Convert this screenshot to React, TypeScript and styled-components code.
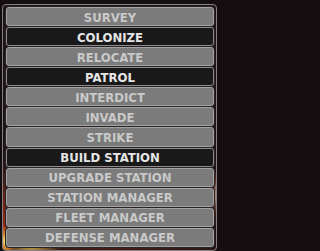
import React from 'react'
import styled, { createGlobalStyle } from 'styled-components'

const GlobalStyle = createGlobalStyle`
  html, body {
    margin: 0;
    padding: 0;
    background: #140e11;
  }
  body {
    width: 219px;
    height: 251px;
    overflow: hidden;
    font-family: "DejaVu Sans Condensed", "DejaVu Sans", sans-serif;
  }
`

const Frame = styled.div`
  box-sizing: border-box;
  margin: 4px 2px 0 2px;
  width: 215px;
  height: 247px;
  padding: 2px 2px 3px 3px;
  border: 1px solid #858085;
  border-radius: 4px;
  background:
    radial-gradient(ellipse 10px 16px at 2px 236px, rgba(255, 240, 120, 0.95), rgba(240, 170, 40, 0.6) 50%, transparent 100%),
    radial-gradient(ellipse 30px 22px at 28px 247px, rgba(255, 210, 90, 0.7), transparent 100%),
    radial-gradient(ellipse 14px 70px at 0px 225px, rgba(190, 50, 20, 0.85), transparent 100%),
    radial-gradient(ellipse 12px 26px at 214px 190px, rgba(255, 215, 190, 0.7), rgba(200, 80, 60, 0.3) 60%, transparent 100%),
    radial-gradient(ellipse 140px 30px at 110px 250px, rgba(130, 35, 20, 0.5), transparent 100%),
    #1d1517;
  display: flex;
  flex-direction: column;
  gap: 1px;
`

const Row = styled.div<{ $active?: boolean }>`
  box-sizing: border-box;
  flex: 1;
  border-radius: 3px;
  border: 1px solid ${({ $active }) => ($active ? '#8d8d8d' : '#a3a3a3')};
  box-shadow: 0 0 0 1px #2a2224;
  background: ${({ $active }) => ($active ? '#191919' : '#7b7b7b')};
  color: ${({ $active }) => ($active ? '#e6e6e6' : '#c9c9c9')};
  display: flex;
  align-items: center;
  justify-content: center;
  font-weight: bold;
  font-size: 13px;
  letter-spacing: 0;
  line-height: 1;
  padding-top: 1px;
`

const items: { label: string; active?: boolean }[] = [
  { label: 'SURVEY' },
  { label: 'COLONIZE', active: true },
  { label: 'RELOCATE' },
  { label: 'PATROL', active: true },
  { label: 'INTERDICT' },
  { label: 'INVADE' },
  { label: 'STRIKE' },
  { label: 'BUILD STATION', active: true },
  { label: 'UPGRADE STATION' },
  { label: 'STATION MANAGER' },
  { label: 'FLEET MANAGER' },
  { label: 'DEFENSE MANAGER' },
]

const App: React.FC = () => (
  <>
    <GlobalStyle />
    <Frame>
      {items.map((item) => (
        <Row key={item.label} $active={item.active}>
          {item.label}
        </Row>
      ))}
    </Frame>
  </>
)

export default App
